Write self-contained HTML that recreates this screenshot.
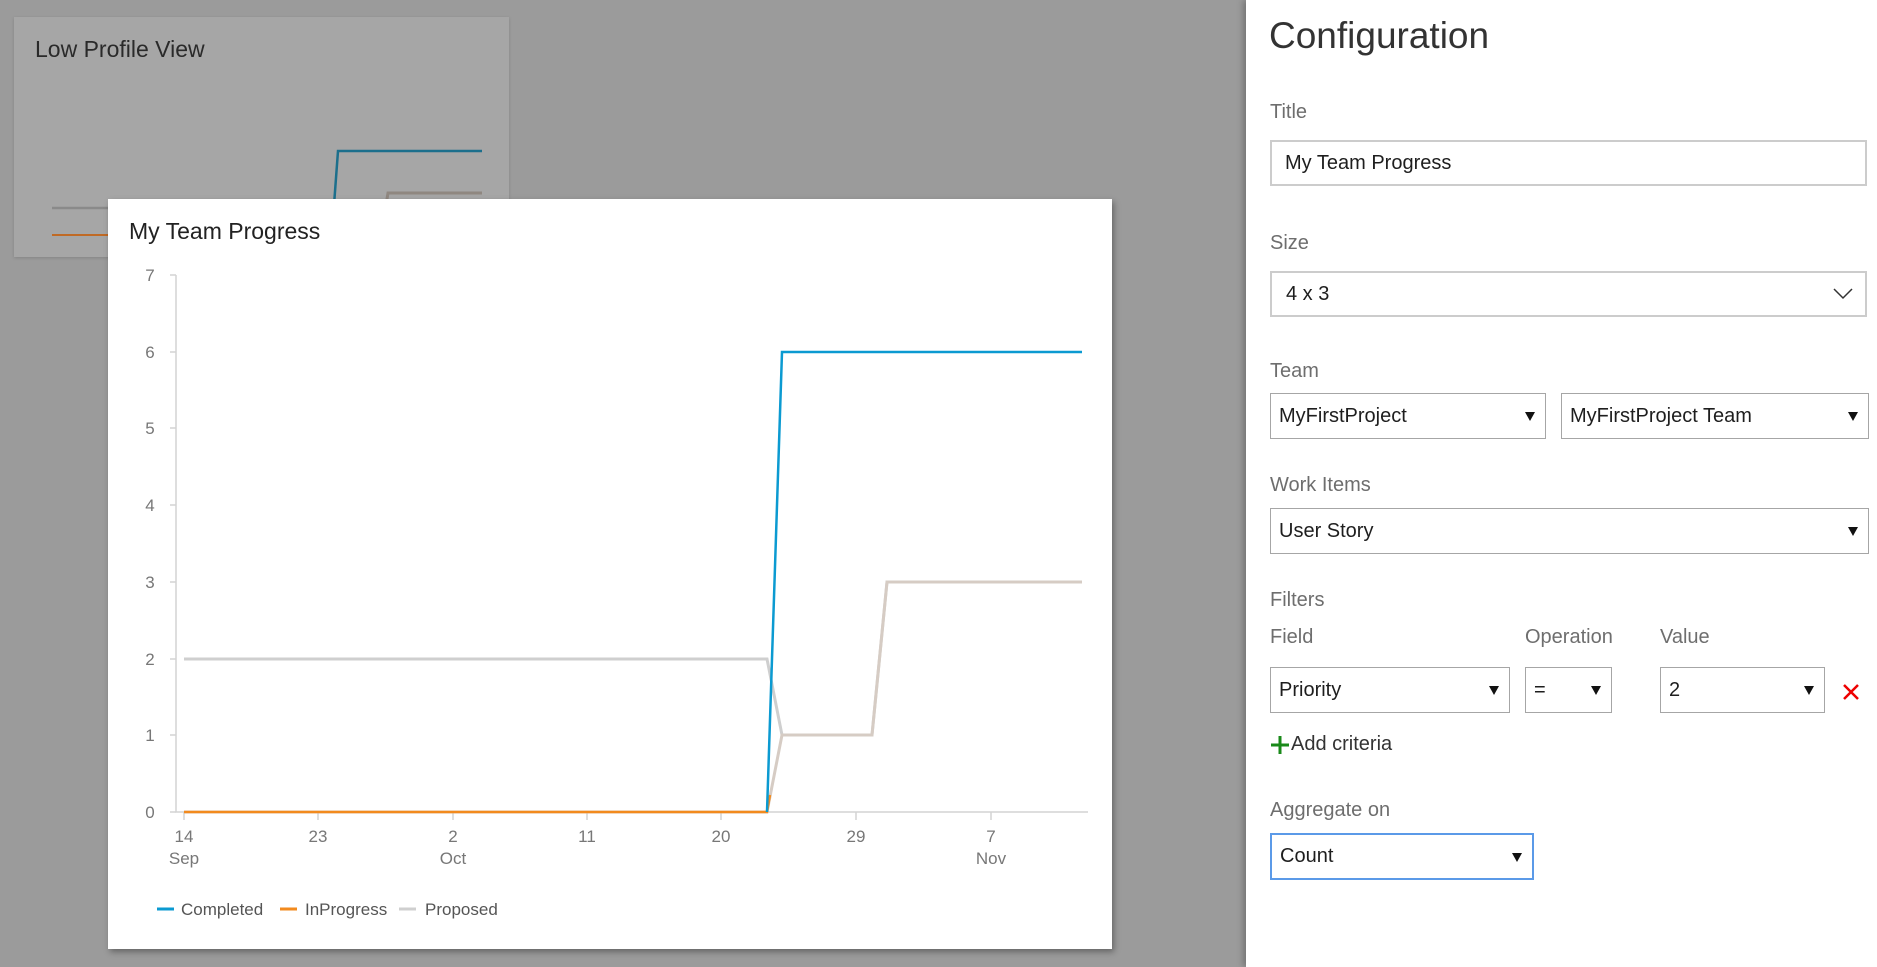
<!DOCTYPE html>
<html><head><meta charset="utf-8"><style>
*{box-sizing:border-box;margin:0;padding:0}
body{width:1877px;height:967px;overflow:hidden;background:#9b9b9b;font-family:"Liberation Sans",sans-serif;position:relative}
.abs{position:absolute}
.lbl{position:absolute;left:1270px;color:#6e6e6e;font-size:20px;line-height:24px}
.box{position:absolute;border:1px solid #a6a6a6;background:#fff;font-size:20px;color:#1e1e1e;padding-left:8px;display:flex;align-items:center}
.arr{position:absolute;right:10px;top:50%;margin-top:-4px;width:0;height:0;border-left:5px solid transparent;border-right:5px solid transparent;border-top:9px solid #111}
.tx{font-size:17px;fill:#777;font-family:"Liberation Sans",sans-serif}
</style></head><body>
<!-- low profile card -->
<div class="abs" style="left:14px;top:17px;width:495px;height:240px;background:#a6a6a6;box-shadow:0 1px 3px rgba(0,0,0,.15)"></div>
<div class="abs" style="left:35px;top:36px;font-size:23px;color:#2a2a2a">Low Profile View</div>
<svg class="abs" style="left:0;top:0" width="520" height="320">
<path d="M52 208H108" stroke="#8a8a8a" stroke-width="2.5" fill="none"/>
<path d="M52 235H108" stroke="#c06a25" stroke-width="2" fill="none"/>
<path d="M334 205L338 151H482" stroke="#1c6f8c" stroke-width="2.5" fill="none"/>
<path d="M386 205L388 193H482" stroke="#8f8780" stroke-width="3" fill="none"/>
</svg>
<!-- main card -->
<div class="abs" style="left:108px;top:199px;width:1004px;height:750px;background:#fff;box-shadow:2px 3px 6px rgba(0,0,0,.35)"></div>
<div class="abs" style="left:129px;top:218px;font-size:23px;color:#222">My Team Progress</div>
<svg class="abs" style="left:0;top:0" width="1120" height="967">
<path d="M176 275V812H1088" stroke="#d4d4d4" stroke-width="1.5" fill="none"/>
<g stroke="#d4d4d4" stroke-width="1.5">
<path d="M170 275H176M170 352H176M170 428H176M170 505H176M170 582H176M170 659H176M170 735H176M170 812H176"/>
<path d="M184 812V820M318 812V820M453 812V820M587 812V820M721 812V820M856 812V820M991 812V820"/>
</g>
<g class="tx" text-anchor="middle">
<text x="150" y="281">7</text><text x="150" y="358">6</text><text x="150" y="434">5</text><text x="150" y="511">4</text><text x="150" y="588">3</text><text x="150" y="665">2</text><text x="150" y="741">1</text><text x="150" y="818">0</text>
<text x="184" y="842">14</text><text x="184" y="864">Sep</text>
<text x="318" y="842">23</text>
<text x="453" y="842">2</text><text x="453" y="864">Oct</text>
<text x="587" y="842">11</text><text x="721" y="842">20</text><text x="856" y="842">29</text>
<text x="991" y="842">7</text><text x="991" y="864">Nov</text>
</g>
<path d="M184 659H767L782 735H872L887 582H1082" stroke="#cfcfcf" stroke-width="3" fill="none"/>
<path d="M184 812H767L782 735H872L887 582H1082" stroke="#d6ccc4" stroke-width="3" fill="none"/>
<path d="M184 812H767L770 795" stroke="#f28a1e" stroke-width="2.5" fill="none"/>
<path d="M767 812L782 352H1082" stroke="#0b9ad1" stroke-width="2.5" fill="none"/>
<path d="M157 909H174" stroke="#0b9ad1" stroke-width="3"/>
<path d="M280 909H297" stroke="#f28a1e" stroke-width="3"/>
<path d="M399 909H416" stroke="#cfcfcf" stroke-width="3"/>
<g style="font-size:17px;fill:#555;font-family:'Liberation Sans',sans-serif">
<text x="181" y="915">Completed</text><text x="305" y="915">InProgress</text><text x="425" y="915">Proposed</text>
</g>
</svg>
<!-- right panel -->
<div class="abs" style="left:1246px;top:0;width:631px;height:967px;background:#fff;box-shadow:-3px 0 6px rgba(0,0,0,.25)"></div>
<div class="abs" style="left:1269px;top:14px;font-size:37px;color:#333;line-height:44px">Configuration</div>
<div class="lbl" style="top:100px">Title</div>
<div class="box" style="left:1270px;top:140px;width:597px;height:46px;border:2px solid #ccc;padding-left:13px">My Team Progress</div>
<div class="lbl" style="top:231px">Size</div>
<div class="box" style="left:1270px;top:271px;width:597px;height:46px;border:2px solid #ccc;padding-left:14px">4 x 3
<svg class="abs" style="right:12px;top:15px" width="20" height="12"><path d="M1 1L10 10L19 1" stroke="#333" stroke-width="1.5" fill="none"/></svg></div>
<div class="lbl" style="top:359px">Team</div>
<div class="box" style="left:1270px;top:393px;width:276px;height:46px">MyFirstProject<i class="arr"></i></div>
<div class="box" style="left:1561px;top:393px;width:308px;height:46px">MyFirstProject Team<i class="arr"></i></div>
<div class="lbl" style="top:473px">Work Items</div>
<div class="box" style="left:1270px;top:508px;width:599px;height:46px">User Story<i class="arr"></i></div>
<div class="lbl" style="top:588px">Filters</div>
<div class="lbl" style="top:625px">Field</div>
<div class="lbl" style="top:625px;left:1525px">Operation</div>
<div class="lbl" style="top:625px;left:1660px">Value</div>
<div class="box" style="left:1270px;top:667px;width:240px;height:46px">Priority<i class="arr"></i></div>
<div class="box" style="left:1525px;top:667px;width:87px;height:46px">=<i class="arr"></i></div>
<div class="box" style="left:1660px;top:667px;width:165px;height:46px">2<i class="arr"></i></div>
<svg class="abs" style="left:1842px;top:683px" width="18" height="18"><path d="M2 2L16 16M16 2L2 16" stroke="#e00" stroke-width="2.5"/></svg>
<svg class="abs" style="left:1270px;top:735px" width="20" height="20"><path d="M10 1V19M1 10H19" stroke="#1a8a1a" stroke-width="3"/></svg>
<div class="abs" style="left:1291px;top:733px;font-size:20px;color:#333">Add criteria</div>
<div class="lbl" style="top:798px">Aggregate on</div>
<div class="box" style="left:1270px;top:833px;width:264px;height:47px;border:2px solid #5b9ae8">Count<i class="arr"></i></div>
</body></html>
